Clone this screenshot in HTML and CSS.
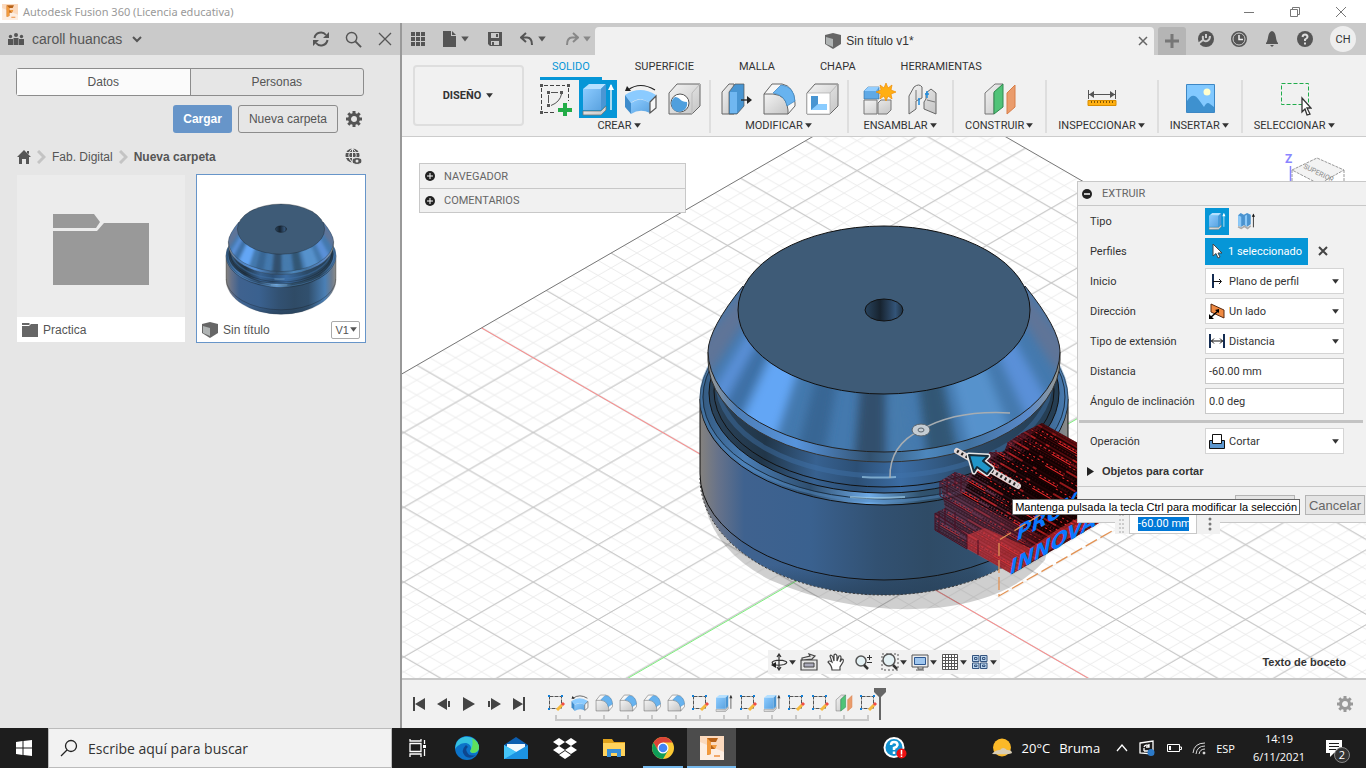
FILE: index.html
```html
<!DOCTYPE html>
<html lang="es">
<head>
    <meta charset="UTF-8">
    <title>Autodesk Fusion 360</title>
    <link rel="stylesheet" href="styles.css">
</head>
<body>
    <!-- shared icons -->
    <svg class="sprite" width="0" height="0" aria-hidden="true">
        <defs>
            <linearGradient id="g-blue" x1="0" y1="0" x2="1" y2="1">
                <stop offset="0" stop-color="#8ccbff"/><stop offset="1" stop-color="#5ba3e0"/>
            </linearGradient>
            <linearGradient id="g-gray" x1="0" y1="0" x2="1" y2="1">
                <stop offset="0" stop-color="#f4f4f4"/><stop offset="1" stop-color="#c4c4c4"/>
            </linearGradient>
            <linearGradient id="g-lip">
                <stop offset="0" stop-color="#9b9a96"/><stop offset=".08" stop-color="#4d7db5"/>
                <stop offset=".25" stop-color="#5794dc"/><stop offset=".46" stop-color="#32516f"/>
                <stop offset=".62" stop-color="#4d87bd"/><stop offset=".74" stop-color="#41719e"/>
                <stop offset=".91" stop-color="#5a8acb"/><stop offset="1" stop-color="#9b9a90"/>
            </linearGradient>
            <linearGradient id="g-base">
                <stop offset="0" stop-color="#85827e"/><stop offset=".05" stop-color="#66728a"/>
                <stop offset=".12" stop-color="#3f628f"/><stop offset=".3" stop-color="#3a618f"/>
                <stop offset=".48" stop-color="#325172"/><stop offset=".62" stop-color="#2f4b66"/>
                <stop offset=".75" stop-color="#31506e"/><stop offset=".9" stop-color="#4a7fb5"/>
                <stop offset=".96" stop-color="#6c7c90"/><stop offset="1" stop-color="#8d8c88"/>
            </linearGradient>
            <linearGradient id="g-rim">
                <stop offset="0" stop-color="#33597f"/><stop offset=".12" stop-color="#4a7db4"/>
                <stop offset=".3" stop-color="#2f4f70"/><stop offset=".46" stop-color="#6eaae6"/>
                <stop offset=".6" stop-color="#31536f"/><stop offset=".85" stop-color="#29445b"/>
                <stop offset="1" stop-color="#4a7db4"/>
            </linearGradient>
            <linearGradient id="g-groove">
                <stop offset="0" stop-color="#2a4259"/><stop offset=".15" stop-color="#213649"/>
                <stop offset=".3" stop-color="#376190"/><stop offset=".42" stop-color="#2c4f75"/>
                <stop offset=".55" stop-color="#3b6ca3"/><stop offset=".75" stop-color="#2b4a68"/>
                <stop offset="1" stop-color="#253d52"/>
            </linearGradient>
            <linearGradient id="g-hole">
                <stop offset="0" stop-color="#28445f"/><stop offset=".4" stop-color="#17232f"/>
                <stop offset=".8" stop-color="#335478"/><stop offset="1" stop-color="#1e3142"/>
            </linearGradient>
            <linearGradient id="g-fillet" x1="0" y1="0" x2="0" y2="1">
                <stop offset=".75" stop-color="#28415a" stop-opacity="0"/><stop offset="1" stop-color="#28415a" stop-opacity=".7"/>
            </linearGradient>
            <filter id="sheen"><feGaussianBlur stdDeviation="5"/></filter>
            <clipPath id="cone-clip"><path d="M743 286Q709 328 708 351A176 101 0 0 0 1060 351Q1059 328 1025 286Z"/></clipPath>
        </defs>

        <g id="model">
            <path fill="url(#g-base)" d="M700 399V478A184 117 0 0 0 1068 478V399Z"/>
            <path fill="url(#g-fillet)" d="M700 475A184 106 0 0 0 1068 475A184 120 0 0 1 700 475Z"/>
            <path fill="none" stroke="#111" d="M700 399V474A184 106 0 0 0 1068 474V399"/>
            <path fill="none" stroke="#333" stroke-dasharray="2 2" d="M700 478A184 117 0 0 0 1068 478"/>
            <ellipse cx="884" cy="399" rx="184" ry="106" fill="url(#g-rim)" stroke="#111"/>
            <ellipse cx="884" cy="397" rx="183" ry="104" fill="none" stroke="#5287bd" stroke-width="3" opacity=".5"/>
            <ellipse cx="884" cy="397" rx="181" ry="102" fill="none" stroke="#1c3044"/>
            <ellipse cx="884" cy="393" rx="175" ry="100" fill="url(#g-groove)" stroke="#111"/>
            <ellipse cx="884" cy="391" rx="170" ry="96" fill="url(#g-groove)" stroke="#111"/>
            <ellipse cx="884" cy="383" rx="166" ry="93" fill="none" stroke="#4174aa" stroke-width="5" opacity=".45"/>
            <ellipse cx="884" cy="374" rx="169" ry="94" fill="url(#g-groove)"/>
            <path fill="url(#g-lip)" stroke="#333" d="M708 352V360A176 102 0 0 0 1060 360V352Z"/>
            <g clip-path="url(#cone-clip)">
                <path fill="#4479ae" d="M700 270H1070V460H700Z"/>
                <g filter="url(#sheen)">
                    <path fill="#99958a" d="M884 110 480 510V200ZM884 110 1288 510V200Z"/>
                    <path fill="#5f7498" d="M884 110 570 510H620ZM884 110 1148 510H1198Z"/>
                    <path fill="#5a90d8" d="M884 110 640 510H665ZM884 110 1070 510H1110Z"/>
                    <path fill="#3d70a6" d="M884 110 668 510H695Z"/>
                    <path fill="#63a6f5" d="M884 110 700 510H752Z"/>
                    <path fill="#396694" d="M884 110 782 510H815Z"/>
                    <path fill="#31506d" d="M884 110 850 510H886Z"/>
                    <path fill="#477cad" d="M884 110 893 510H918Z"/>
                    <path fill="#335775" d="M884 110 934 510H970Z"/>
                    <path fill="#5792cc" d="M884 110 985 510H1042Z"/>
                </g>
            </g>
            <path fill="none" stroke="#222" d="M743 286Q709 328 708 351A176 101 0 0 0 1060 351Q1059 328 1025 286"/>
            <ellipse cx="884" cy="310" rx="146" ry="84" fill="#3e5b77" stroke="#111"/>
            <ellipse cx="884" cy="310" rx="19" ry="11" fill="url(#g-hole)" stroke="#111"/>
            <path fill="none" stroke="#a9d6ef" stroke-width="2" opacity=".6" d="M850 497Q875 499 905 497M862 477Q880 478 896 477"/>
        </g>

        <symbol id="i-cube" viewBox="0 0 16 16">
            <path fill="#666" d="M0 2 8 0 16 2V11L8 16 0 11Z"/><path fill="#b0b4b4" d="M1 4 8 6V14L1 11Z"/>
        </symbol>
        <symbol id="i-extrude" viewBox="0 0 34 34">
            <path fill="url(#g-gray)" stroke="#777" stroke-width=".8" d="M2 29H20L25 24V28L20 33H2Z"/>
            <path fill="#b5e0ff" d="M2 7 8 2H25L20 7Z"/><path fill="url(#g-blue)" d="M2 7H20V28H2Z"/><path fill="#4a96d4" d="M20 7 25 2V23L20 28Z"/>
            <path fill="none" stroke="currentColor" stroke-width="1.300" d="M30 28V3"/><path fill="currentColor" d="M27 8 30 2 33 8Z"/>
        </symbol>
        <symbol id="i-sketch" viewBox="0 0 34 34">
            <path fill="none" stroke="#444" stroke-dasharray="4 2" d="M6 3.500H27M6 30.500H18M3.500 6V28M30.500 6V19"/>
            <path fill="none" stroke="#555" d="M10.500 13V21M13 10.500H20M23.500 12Q22 20 13 23.500"/>
            <path fill="#555" d="M2 2H5V5H2ZM29 2H32V5H29ZM2 29H5V32H2ZM9 9H12V12H9ZM22 9H25V12H22ZM9 22H12V25H9Z"/>
            <path fill="#22ac47" d="M25 21H29V26H34V30H29V34H25V30H20V26H25Z"/>
        </symbol>
        <symbol id="i-revolve" viewBox="0 0 34 34">
            <path fill="none" stroke="#222" stroke-width="1.200" d="M4 8Q16-1 31 8"/><path fill="#222" d="M1 9 3 4 7 9Z"/>
            <path fill="#8bcbff" d="M1 13Q16 3 32 13L27 22Q16 13 7 21Z"/><path fill="#3f8ccc" d="M1 13 7 21V32L1 25Z"/>
            <path fill="url(#g-blue)" d="M7 21Q16 14 26 21V31Q16 26 7 32Z"/>
            <path fill="#f6f6f6" stroke="#555" stroke-width="1.200" d="M26 20 32 14V26L26 31Z"/>
        </symbol>
        <symbol id="i-hole" viewBox="0 0 34 34">
            <path fill="url(#g-gray)" stroke="#666" d="M2 11 10 2H33V24L25 32H2Z"/><path fill="none" stroke="#bbb" d="M25 32V11L33 2"/>
            <circle cx="13" cy="21" r="9" fill="#fff" stroke="#555"/><path fill="#4f9fdd" d="M8 15C13 15 13 20 20 20A8 8 0 1 1 8 15Z"/>
        </symbol>
        <symbol id="i-press" viewBox="0 0 34 34">
            <path fill="url(#g-gray)" stroke="#666" d="M3 10 10 2H15V32H3Z"/>
            <path fill="#4895d2" stroke="#555" stroke-width=".7" d="M10 10 16 2H25V24L18 32H10Z"/><path fill="#70b7f1" d="M11 10H18V31H11Z"/>
            <path stroke="#222" stroke-width="1.300" d="M22 18H30"/><path fill="#222" d="M28 14 33 18 28 22Z"/>
        </symbol>
        <symbol id="i-fillet" viewBox="0 0 34 34">
            <path fill="#f7f7f7" stroke="#666" d="M2 12 10 2H20Q32 4 33 21V24L26 32Z"/><path fill="url(#g-gray)" stroke="#666" d="M2 12H11Q25 13 26 28V32H2Z"/>
            <path fill="#68b3ef" stroke="#3b83bd" stroke-width=".7" d="M11 11 19 3Q32 4 33 19L25 24Q23 13 11 11Z"/>
        </symbol>
        <symbol id="i-shell" viewBox="0 0 34 34">
            <path fill="url(#g-gray)" stroke="#666" d="M2 11 10 2H33V24L25 32H2Z"/><path fill="#fff" stroke="#aaa" stroke-width=".7" d="M2 11H25V32H2ZM25 11 33 2"/>
            <path fill="#4895d2" d="M6 14H22V28H6Z"/><path fill="#fff" d="M13 14H22V22H13Z"/><path fill="#8accff" d="M6 28 13 22H22V28Z"/>
        </symbol>
        <symbol id="i-joint" viewBox="0 0 34 34">
            <path fill="#5fa9e6" stroke="#336d9b" stroke-width=".6" d="M2 9 6 5H17V17H2Z"/><path fill="#93ceff" d="M2 9 6 5H17L14 9Z"/>
            <path fill="url(#g-gray)" stroke="#777" d="M2 18H15V32H2ZM16 21 19 18H29V28L25 32H16Z"/>
            <path fill="#ffaf13" stroke="#f18c00" stroke-width=".7" d="M24 1 26 6 30 3 29 8 34 10 29 12 30 17 26 14 24 19 22 14 18 17 19 12 14 10 19 8 18 3 22 6Z"/>
        </symbol>
        <symbol id="i-asjoint" viewBox="0 0 34 34">
            <path fill="url(#g-gray)" stroke="#666" d="M4 14 9 5Q14 1 17 5V16L11 19V27L4 32ZM31 11 26 7 21 11V17L19 20V27L31 32Z"/>
            <path fill="none" stroke="#777" d="M11 8V18M22 18 30 20"/><path stroke="#1c8ce0" stroke-width="1.500" d="M14 16V23M22 9V16M20 12H24"/>
        </symbol>
        <symbol id="i-plane" viewBox="0 0 34 34">
            <path fill="url(#g-gray)" stroke="#777" d="M2 11 12 2H20L11 11V32H2Z"/><path fill="#50c378" stroke="#318a50" d="M11 10 20 2V25L11 32Z"/><path fill="#ea9c6c" stroke="#d87e48" d="M24 11 32 3V25L24 32Z"/>
        </symbol>
        <symbol id="i-measure" viewBox="0 0 34 34">
            <path stroke="#555" d="M3.500 8V17M30.500 8V17M4 12.500H30"/><path fill="#555" d="M4 12.500 9 9V16ZM30 12.500 25 9V16Z"/>
            <path fill="#ffb012" stroke="#d88d00" d="M3 18.500H31V23.500H3Z"/><path stroke="#835600" d="M6.500 19V21M9.500 19V21M12.500 19V21M15.500 19V21M18.500 19V21M21.500 19V21M24.500 19V21M27.500 19V21"/>
        </symbol>
        <symbol id="i-image" viewBox="0 0 34 34">
            <path fill="#82c9ff" stroke="#3d87c4" d="M3.500 2.500H31.500V30.500H3.500Z"/><circle cx="24" cy="10" r="3.500" fill="#ffffce"/>
            <path fill="#3e91cf" d="M4 19Q10 9 16 18L21 25Q24 19 27 22L31 25V30H4Z"/>
        </symbol>
        <symbol id="i-select" viewBox="0 0 34 34">
            <path fill="none" stroke="#20ac4b" stroke-dasharray="4 2" d="M3.500 1.500H30.500V22.500H3.500Z"/><path fill="#fff" stroke="#333" stroke-width="1.300" d="M24 16V30L27 27 29 33 32 32 29 26H33Z"/>
        </symbol>
        <symbol id="i-gear" viewBox="0 0 16 16">
            <circle cx="8" cy="8" r="4.500" fill="none" stroke="currentColor" stroke-width="3"/><path stroke="currentColor" stroke-width="3" d="M8 0V3M8 13V16M0 8H3M13 8H16M2.300 2.300 4.500 4.500M11.500 11.500 13.700 13.700M2.300 13.700 4.500 11.500M11.500 4.500 13.700 2.300"/>
        </symbol>
        <symbol id="i-minisketch" viewBox="0 0 18 18">
            <path fill="none" stroke="#555" stroke-dasharray="4 1" d="M2.500 2.500H14.500V14.500H2.500Z"/><path fill="#1380d8" d="M1 1H3V3H1ZM14 1H16V3H14ZM1 14H3V16H1Z"/>
            <path stroke="#f6b93d" stroke-width="3" d="M10 16 15 11"/><path stroke="#f14d43" stroke-width="3" d="M15 11 17 9"/>
        </symbol>
        <symbol id="i-down" viewBox="0 0 8 8"><path fill="currentColor" d="M1 2H7L4 6Z"/></symbol>
        <symbol id="i-lens" viewBox="0 0 18 18">
            <circle cx="7" cy="7" r="5.500" fill="none" stroke="currentColor" stroke-width="1.500"/><path stroke="currentColor" stroke-width="2" d="M11 11 17 17"/>
        </symbol>
        <symbol id="i-logo" viewBox="0 0 24 24">
            <path fill="#fbd9bd" d="M0 0H24V24H0Z"/><path fill="#fdeee2" d="M0 6 24 16V24H0Z"/>
            <path fill="#b76117" d="M7 2H18L16 6H11V9H16L15 13H11V18L7 19Z"/><path fill="#f29a3d" d="M7 2 11 6V18L7 19ZM11 9H17L15 13Z"/><path fill="#f2a769" d="M14 19H20V21H14Z"/>
        </symbol>
    </svg>

    <header class="titlebar">
        <svg class="app-logo" viewBox="0 0 24 24"><use href="#i-logo"/></svg>
        <span class="app-name">Autodesk Fusion 360 (Licencia educativa)</span>
        <div class="window-btns">
            <button aria-label="Minimizar"><svg viewBox="0 0 12 12"><path d="M1 6.500H11"/></svg></button>
            <button aria-label="Restaurar"><svg viewBox="0 0 12 12"><path d="M1.500 3.500H8.500V10.500H1.500ZM3.500 3V1.500H10.500V8.500H9"/></svg></button>
            <button aria-label="Cerrar"><svg viewBox="0 0 12 12"><path d="M1 1 11 11M11 1 1 11"/></svg></button>
        </div>
    </header>

    <div class="main">
        <aside class="data-panel">
            <div class="panel-head">
                <svg width="16" height="13" viewBox="0 0 16 13" fill="#555"><circle cx="2.500" cy="3.500" r="1.700"/><circle cx="8" cy="2" r="2"/><circle cx="13.500" cy="3.500" r="1.700"/><path d="M0 6H5V12H0ZM5.500 5H10.500V12H5.500ZM11 6H16V12H11Z"/></svg>
                <button class="team">caroll huancas <svg width="10" height="10" viewBox="0 0 10 10"><path fill="none" stroke="#555" stroke-width="2" d="M1 3 5 7 9 3"/></svg></button>
                <button aria-label="Actualizar"><svg width="16" height="16" viewBox="0 0 16 16"><path fill="none" stroke="#555" stroke-width="2" d="M1.500 7A6.500 6.500 0 0 1 13 4M14.500 9A6.500 6.500 0 0 1 3 12"/><path fill="#555" d="M16 1V7H10ZM0 15V9H6Z"/></svg></button>
                <button aria-label="Buscar"><svg width="17" height="17"><use href="#i-lens"/></svg></button>
                <button aria-label="Cerrar panel"><svg width="14" height="14" viewBox="0 0 14 14"><path stroke="#555" stroke-width="1.300" d="M1 1 13 13M13 1 1 13"/></svg></button>
            </div>
            <div class="panel-body">
                <div class="segment">
                    <button class="active">Datos</button>
                    <button>Personas</button>
                </div>
                <div class="actions">
                    <button class="upload">Cargar</button>
                    <button class="new-folder">Nueva carpeta</button>
                    <button class="gear" aria-label="Configuración"><svg width="16" height="16"><use href="#i-gear"/></svg></button>
                </div>
                <nav class="crumbs">
                    <a href="#" aria-label="Inicio"><svg width="14" height="14" viewBox="0 0 14 14" fill="#555"><path d="M7 0 14 7H12V14H9V9H5V14H2V7H0ZM10 1H12V4L10 3Z"/></svg></a>
                    <svg width="9" height="14" viewBox="0 0 9 14"><path fill="none" stroke="#c4c4c4" stroke-width="3" d="M1 1 7 7 1 13"/></svg>
                    <a href="#">Fab. Digital</a>
                    <svg width="9" height="14" viewBox="0 0 9 14"><path fill="none" stroke="#c4c4c4" stroke-width="3" d="M1 1 7 7 1 13"/></svg>
                    <b>Nueva carpeta</b>
                    <button aria-label="Abrir en la web"><svg width="17" height="17" viewBox="0 0 17 17"><circle cx="7.500" cy="7.500" r="7" fill="#555"/><path fill="none" stroke="#e6e6e6" d="M0 4.500H15M0 9.500H15M7.500 0V15M7.500 0Q0 7 7.500 15M7.500 0Q15 7 7.500 15"/><ellipse cx="12" cy="13" rx="5" ry="3.500" fill="#555" stroke="#e6e6e6"/><circle cx="12" cy="13" r="1.500" fill="#e6e6e6"/></svg></button>
                </nav>
                <div class="cards">
                    <div class="card">
                        <div class="thumb"><svg width="96" height="72" viewBox="0 0 96 72" fill="#999"><path d="M0 0H41L47 8 43 14H0Z"/><path d="M0 17H44L51 9H96V71H0Z"/></svg></div>
                        <div class="caption">
                            <svg width="16" height="14" viewBox="0 0 16 14" fill="#666"><path d="M0 0H7L8 1 7 2H0ZM0 3H7L9 1H16V14H0Z"/></svg>
                            <span>Practica</span>
                        </div>
                    </div>
                    <div class="card selected">
                        <div class="thumb"><svg width="168" height="142" viewBox="603 129 562 475"><use href="#model"/></svg></div>
                        <div class="caption">
                            <svg width="16" height="16"><use href="#i-cube"/></svg>
                            <span>Sin título</span>
                            <button class="version">V1<svg width="9" height="9"><use href="#i-down"/></svg></button>
                        </div>
                    </div>
                </div>
            </div>
        </aside>

        <main class="workspace">
            <div class="tabbar">
                <div class="quick">
                    <button aria-label="Panel de datos"><svg width="14" height="14" viewBox="0 0 14 14" fill="#555"><path d="M0 0H4V4H0ZM5 0H9V4H5ZM10 0H14V4H10ZM0 5H4V9H0ZM5 5H9V9H5ZM10 5H14V9H10ZM0 10H4V14H0ZM5 10H9V14H5ZM10 10H14V14H10Z"/></svg></button>
                    <button aria-label="Archivo"><svg width="14" height="16" viewBox="0 0 14 16" fill="#555"><path d="M0 0H8V5H13V16H0ZM9 0 13 4H9Z"/></svg><svg class="arrow" width="10" height="10"><use href="#i-down"/></svg></button>
                    <button aria-label="Guardar"><svg width="14" height="14" viewBox="0 0 14 14"><path fill="#555" d="M0 0H14V14H2L0 12Z"/><path fill="#cacaca" d="M3 1H11V6H3ZM3 9H11V13H3Z"/><path fill="#555" d="M8 2H10V5H8ZM4 10H6V13H4Z"/></svg></button>
                    <button aria-label="Deshacer"><svg width="14" height="14" viewBox="0 0 14 14"><path fill="none" stroke="#555" stroke-width="2" d="M6 1 1 5.500 6 10M1 5.500H7Q12 5.500 12 13"/></svg><svg class="arrow" width="10" height="10"><use href="#i-down"/></svg></button>
                    <button class="off" aria-label="Rehacer"><svg width="14" height="14" viewBox="0 0 14 14"><path fill="none" stroke="#888" stroke-width="2" d="M8 1 13 5.500 8 10M13 5.500H7Q2 5.500 2 13"/></svg><svg class="arrow" width="10" height="10"><use href="#i-down"/></svg></button>
                </div>
                <div class="doc-tab">
                    <span class="doc-name"><svg width="16" height="16"><use href="#i-cube"/></svg>Sin título v1*</span>
                    <button aria-label="Cerrar documento"><svg width="10" height="10" viewBox="0 0 10 10"><path stroke="#666" stroke-width="1.500" d="M1 1 9 9M9 1 1 9"/></svg></button>
                </div>
                <button class="new-tab" aria-label="Nuevo diseño"><svg width="14" height="14" viewBox="0 0 14 14"><path stroke="#777" stroke-width="3" d="M7 0V14M0 7H14"/></svg></button>
                <div class="account">
                    <button aria-label="Extensiones"><svg width="16" height="16" viewBox="0 0 16 16"><circle cx="8" cy="8" r="8" fill="#555"/><path fill="none" stroke="#ccc" stroke-width="2" d="M0 13 5 9M5 5Q4 11 9 10 12 9 12 5M8 3V7"/></svg></button>
                    <button aria-label="Estado del trabajo"><svg width="16" height="16" viewBox="0 0 16 16"><circle cx="8" cy="8" r="7" fill="#555" stroke="#555" stroke-width="2"/><circle cx="8" cy="8" r="6" fill="none" stroke="#ccc"/><path fill="none" stroke="#eee" stroke-width="1.500" d="M8 4V8.500H12"/></svg></button>
                    <button aria-label="Notificaciones"><svg width="16" height="16" viewBox="0 0 16 16" fill="#555"><path d="M8 0C13 1 11 9 14 12V13H2V12C5 9 3 1 8 0ZM6 14H10L8 16Z"/></svg></button>
                    <button aria-label="Ayuda"><svg width="16" height="16" viewBox="0 0 16 16"><circle cx="8" cy="8" r="8" fill="#555"/><path fill="none" stroke="#ddd" stroke-width="2" d="M5.500 6Q6 3.500 8 3.500 10.500 3.500 10.500 6 10.500 7 8 8.500V10M8 11.500V13.500"/></svg></button>
                    <button class="avatar">CH</button>
                </div>
            </div>

            <div class="ribbon">
                <button class="workspace-menu">DISEÑO <svg width="9" height="9"><use href="#i-down"/></svg></button>
                <div class="ribbon-main">
                    <div class="ribbon-tabs">
                        <button class="active">SOLIDO</button>
                        <button>SUPERFICIE</button>
                        <button>MALLA</button>
                        <button>CHAPA</button>
                        <button>HERRAMIENTAS</button>
                    </div>
                    <div class="groups">
                        <div class="group wide">
                            <div class="tools">
                                <button aria-label="Crear boceto"><svg><use href="#i-sketch"/></svg></button>
                                <button class="on" aria-label="Extruir"><svg><use href="#i-extrude"/></svg></button>
                                <button aria-label="Revolución"><svg><use href="#i-revolve"/></svg></button>
                                <button aria-label="Agujero"><svg><use href="#i-hole"/></svg></button>
                            </div>
                            <button class="group-name">CREAR<svg width="9" height="9"><use href="#i-down"/></svg></button>
                        </div>
                        <div class="group wide">
                            <div class="tools">
                                <button aria-label="Pulsar/tirar"><svg><use href="#i-press"/></svg></button>
                                <button aria-label="Empalme"><svg><use href="#i-fillet"/></svg></button>
                                <button aria-label="Vaciado"><svg><use href="#i-shell"/></svg></button>
                            </div>
                            <button class="group-name">MODIFICAR<svg width="9" height="9"><use href="#i-down"/></svg></button>
                        </div>
                        <div class="group">
                            <div class="tools">
                                <button aria-label="Nuevo componente"><svg><use href="#i-joint"/></svg></button>
                                <button aria-label="Unión"><svg><use href="#i-asjoint"/></svg></button>
                            </div>
                            <button class="group-name">ENSAMBLAR<svg width="9" height="9"><use href="#i-down"/></svg></button>
                        </div>
                        <div class="group">
                            <div class="tools"><button aria-label="Plano de desfase"><svg><use href="#i-plane"/></svg></button></div>
                            <button class="group-name">CONSTRUIR<svg width="9" height="9"><use href="#i-down"/></svg></button>
                        </div>
                        <div class="group">
                            <div class="tools"><button aria-label="Medir"><svg><use href="#i-measure"/></svg></button></div>
                            <button class="group-name">INSPECCIONAR<svg width="9" height="9"><use href="#i-down"/></svg></button>
                        </div>
                        <div class="group">
                            <div class="tools"><button aria-label="Lienzo"><svg><use href="#i-image"/></svg></button></div>
                            <button class="group-name">INSERTAR<svg width="9" height="9"><use href="#i-down"/></svg></button>
                        </div>
                        <div class="group">
                            <div class="tools"><button aria-label="Seleccionar"><svg><use href="#i-select"/></svg></button></div>
                            <button class="group-name">SELECCIONAR<svg width="9" height="9"><use href="#i-down"/></svg></button>
                        </div>
                    </div>
                </div>
            </div>

            <div class="canvas">
                <svg class="scene" viewBox="402 137 964 541" preserveAspectRatio="xMidYMid slice">
                    <defs>
                        <pattern id="minor" x="533.300" y="357.700" width="25.900" height="14.960" patternUnits="userSpaceOnUse">
                            <path fill="none" stroke="#e9e9e9" stroke-width=".9" d="M0 0 25.900 14.960M0 14.960 25.900 0"/>
                        </pattern>
                        <pattern id="major" x="533.300" y="357.700" width="129.500" height="74.800" patternUnits="userSpaceOnUse">
                            <path fill="none" stroke="#c2c2c2" d="M0 0 129.500 74.800M0 74.800 129.500 0"/>
                        </pattern>
                        <!-- edges of the extruded letters -->
                        <pattern id="edges" width="61" height="13" patternUnits="userSpaceOnUse" patternTransform="rotate(30)">
                            <path stroke="#120000" stroke-width="1.300" d="M0 .5H61M0 3.500H61M0 6.500H61M0 11.500H61"/>
                            <path stroke="#000" stroke-dasharray="2 1" d="M0 2H61M0 8H40M12 9.500H61"/>
                            <path stroke="#f0282a" d="M0 5H18M30 5H34M40 10.500H61"/>
                            <path stroke="#f0282a" stroke-dasharray="2 3" d="M20 8.500H61M0 12.500H30"/>
                        </pattern>
                        <linearGradient id="g-cut">
                            <stop offset="0" stop-color="#7a3556" stop-opacity=".55"/><stop offset=".3" stop-color="#7d2338" stop-opacity=".75"/>
                            <stop offset=".55" stop-color="#5a0c12"/><stop offset="1" stop-color="#c41b20"/>
                        </linearGradient>
                    </defs>
                    <path fill="url(#minor)" d="M909 81 200 490.500V800H1500V422Z"/>
                    <path fill="url(#major)" d="M909 81 200 490.500V800H1500V422Z"/>
                    <path fill="none" stroke="#777" d="M200 490.500 909 81 1500 422"/>
                    <path stroke="#ff8a8a" d="M481.700 328 1094 681.500"/>
                    <path stroke="#7df07d" d="M1120 394 624 680.500"/>

                    <path fill="#000" opacity=".19" d="M702 480Q702 545 770 580 850 615 935 608 1010 600 1045 560L1060 500Z"/>
                    <use href="#model"/>

                    <path fill="url(#g-cut)" d="M935 513 945 508 940 481 955 472 968 476 990 452 1004 452 1008 442 1022 433 1042 423 1130 472V505L1012 574 935 530Z"/>
                    <path fill="url(#edges)" opacity=".55" d="M935 513 945 508 940 481 955 472 968 476 990 452 1004 452 1008 442 1022 433 1042 423 1130 472V505L1012 574 935 530Z"/>
                    <path fill="#000" opacity=".55" d="M985 478 1030 448 1130 505 1060 525 1020 520Z"/>
                    <path fill="url(#edges)" d="M975 470 1010 447 1042 428 1130 478V510L1040 535 1018 525 962 495Z"/>
                    <path fill="#f03a3c" opacity=".5" d="M967 535 985 528 1030 548 1060 528 1110 500V512L1012 574 967 549Z"/>
                    <path fill="none" stroke="#4a0f22" d="M935 513V530L967 549V535ZM939 511V532M940 481V496L965 510M947 478V494M955 472V487M961 476V492M990 452V465M996 450V466M1008 442V455M1022 433V446M1030 430V444M945 508V525M955 512V530M978 540V555"/>
                    <g class="lettering">
                        <text transform="translate(1017 541) skewY(-30)">PROYEC</text>
                        <text transform="translate(1010 575) skewY(-30)">INNOVAC</text>
                    </g>
                    <path fill="none" stroke="#e29355" stroke-width="1.300" stroke-dasharray="13 4" d="M1040 515 999 540V596L1112 531"/>

                    <path fill="none" stroke="#a7adb2" stroke-width="1.500" d="M890 478Q889 445 921 430 955 410 1010 413"/>
                    <ellipse cx="921" cy="430" rx="9" ry="6" fill="#c5cdd4" stroke="#59636b"/><ellipse cx="921" cy="430" rx="3" ry="2" fill="none" stroke="#59636b"/>
                    <path stroke="#e0d6d6" stroke-width="6" stroke-linecap="round" d="M957 451 1018 486"/>
                    <path stroke="#222" stroke-width="3" stroke-dasharray="2 3" d="M957 451 1018 486"/>
                    <path fill="#2095c9" stroke="#e8e8e8" stroke-width="5" stroke-linejoin="round" d="M969 455 988 456 983 461 992 468 987 474 977 467 974 472Z"/>
                    <path fill="#2095c9" stroke="#172b38" stroke-width="2" stroke-linejoin="round" d="M969 455 988 456 983 461 992 468 987 474 977 467 974 472Z"/>

                    <!-- view cube -->
                    <path fill="#f3f3f3" stroke="#999" stroke-dasharray="3 1" d="M1292 170 1317 158 1344 170 1319 184ZM1344 170V190M1292 170V190"/>
                    <path stroke="#8a86ff" stroke-width="1.500" d="M1290.500 166V182"/>
                    <text class="axis" x="1285" y="163">Z</text>
                    <text class="face" transform="translate(1303 168) rotate(26)">SUPERIOR</text>
                </svg>

                <div class="browser">
                    <button><svg width="10" height="10" viewBox="0 0 10 10"><circle cx="5" cy="5" r="5" fill="#222"/><path stroke="#fff" d="M5 2V8M2 5H8"/></svg>NAVEGADOR</button>
                    <button><svg width="10" height="10" viewBox="0 0 10 10"><circle cx="5" cy="5" r="5" fill="#222"/><path stroke="#fff" d="M5 2V8M2 5H8"/></svg>COMENTARIOS</button>
                </div>

                <form class="dialog">
                    <div class="dialog-head"><svg width="10" height="10" viewBox="0 0 10 10"><circle cx="5" cy="5" r="5" fill="#222"/><path stroke="#fff" stroke-width="1.500" d="M2 5H8"/></svg>EXTRUIR</div>
                    <div class="row">
                        <span class="label">Tipo</span>
                        <button type="button" class="kind on" aria-label="Extrusión"><svg><use href="#i-extrude"/></svg></button>
                        <button type="button" class="kind" aria-label="Extrusión fina"><svg viewBox="0 0 34 32"><path fill="#4a93cf" d="M2 5 7 1 13 4 19 1 26 4V22L19 27 13 24 8 27 2 25Z"/><path fill="#8cc9f8" d="M2 5 8 8V27L2 25ZM15 6 19 4V26L15 24Z"/><path fill="none" stroke="#aaa" stroke-width="3" d="M2 27 8 30 14 26 20 30 26 25"/><path stroke="#111" stroke-width="1.500" d="M31 28V4"/><path fill="#111" d="M28 8 31 2 34 8Z"/></svg></button>
                    </div>
                    <div class="row">
                        <span class="label">Perfiles</span>
                        <button type="button" class="picked"><svg width="12" height="16" viewBox="0 0 12 16"><path fill="#fff" stroke="#444" d="M2 1V13L5 10.500 7 15 9 14 7 10H11Z"/></svg>1 seleccionado</button>
                        <button type="button" class="clear" aria-label="Borrar selección"><svg width="10" height="10" viewBox="0 0 10 10"><path stroke="#444" stroke-width="2" d="M1 1 9 9M9 1 1 9"/></svg></button>
                    </div>
                    <div class="row">
                        <label class="label" for="start">Inicio</label>
                        <div class="field"><svg width="16" height="16" viewBox="0 0 16 16"><path fill="none" stroke="#142c52" stroke-width="2" d="M4 1V15"/><path fill="none" stroke="#111" d="M4 8.500H12M10 6 12.500 8.500 10 11"/></svg><select id="start"><option>Plano de perfil</option></select><svg class="arrow" width="9" height="9"><use href="#i-down"/></svg></div>
                    </div>
                    <div class="row">
                        <label class="label" for="direction">Dirección</label>
                        <div class="field"><svg width="16" height="16" viewBox="0 0 16 16"><path fill="#f08a42" stroke="#5b2a10" d="M2 1 15 7V15L2 9Z"/><path stroke="#000" stroke-width="1.500" d="M1 15 9 8"/><path fill="#000" d="M0 16V11L5 16ZM10 6V10L6 7Z"/></svg><select id="direction"><option>Un lado</option></select><svg class="arrow" width="9" height="9"><use href="#i-down"/></svg></div>
                    </div>
                    <div class="row">
                        <label class="label" for="extent">Tipo de extensión</label>
                        <div class="field"><svg width="16" height="16" viewBox="0 0 16 16"><path stroke="#142c52" stroke-width="2" d="M1 1V15M15 1V15"/><path fill="none" stroke="#111" d="M2 8H14M5 5.500 2.500 8 5 10.500M11 5.500 13.500 8 11 10.500"/></svg><select id="extent"><option>Distancia</option></select><svg class="arrow" width="9" height="9"><use href="#i-down"/></svg></div>
                    </div>
                    <div class="row">
                        <label class="label" for="distance">Distancia</label>
                        <input class="text-input" id="distance" value="-60.00 mm">
                    </div>
                    <div class="row">
                        <label class="label" for="taper">Ángulo de inclinación</label>
                        <input class="text-input" id="taper" value="0.0 deg">
                    </div>
                    <hr>
                    <div class="row">
                        <label class="label" for="operation">Operación</label>
                        <div class="field"><svg width="16" height="16" viewBox="0 0 16 16"><path fill="#5c97cf" stroke="#111" d="M.5 7.500H15.500V15.500H.5Z"/><path fill="#fff" stroke="#111" d="M3.500 1.500H12.500V10.500H3.500Z"/></svg><select id="operation"><option>Cortar</option></select><svg class="arrow" width="9" height="9"><use href="#i-down"/></svg></div>
                    </div>
                    <button type="button" class="expander"><svg width="7" height="9" viewBox="0 0 7 9"><path fill="#222" d="M0 0 7 4.500 0 9Z"/></svg>Objetos para cortar</button>
                    <div class="dialog-foot">
                        <button type="button" aria-label="Aceptar"></button>
                        <button type="button">Cancelar</button>
                    </div>
                </form>

                <div class="value-box">
                    <span class="grip"></span>
                    <span class="value"><input aria-label="Distancia" value="-60.00 mm"></span>
                    <button aria-label="Más opciones"><svg width="4" height="14" viewBox="0 0 4 14" fill="#777"><circle cx="2" cy="2" r="1.500"/><circle cx="2" cy="7" r="1.500"/><circle cx="2" cy="12" r="1.500"/></svg></button>
                </div>
                <div class="tooltip" role="tooltip">Mantenga pulsada la tecla Ctrl para modificar la selección</div>

                <div class="navbar">
                    <button aria-label="Órbita"><svg width="18" height="18" viewBox="0 0 18 18"><path fill="none" stroke="#333" stroke-width="1.200" d="M9 1V17M7 4 9 1 11 4M7 14 9 17 11 14M3 11.500Q9 13 14 11.500 18 10 16 8.500 10 6 4 8 1 9 3 11"/><path fill="#222" d="M1 12 6 9V15Z"/></svg><svg class="arrow" width="9" height="9"><use href="#i-down"/></svg></button>
                    <button aria-label="Mirar a"><svg width="18" height="18" viewBox="0 0 18 18"><path fill="#e4e4e4" stroke="#444" stroke-width="1.200" d="M1 7H17V17H1ZM2 5 10 3 9 1 15 3 12 6 2 7Z"/><path fill="#aab" stroke="#444" d="M4 10H14V14H4Z"/></svg></button>
                    <button aria-label="Encuadre"><svg width="18" height="18" viewBox="0 0 18 18"><path fill="#fff" stroke="#444" stroke-width="1.200" d="M5 17Q5 13 1 9 2 7 5 9L3 3Q4 1 6 4L7 8V2Q9 0 10 3V8L12 3Q14 2 14 5L13 9 15 6Q17 6 16 9L13 14V17Z"/></svg></button>
                    <button aria-label="Zoom"><svg width="18" height="18" viewBox="0 0 18 18"><circle cx="7" cy="8" r="5" fill="#e4f1f4" stroke="#555" stroke-width="1.500"/><path stroke="#333" stroke-width="2.500" d="M10 12 14 16"/><path stroke="#333" d="M13 4.500H18M15.500 2V7M13 9.500H18"/></svg></button>
                    <button aria-label="Ajustar"><svg width="18" height="18" viewBox="0 0 18 18"><path fill="none" stroke="#555" stroke-dasharray="2 2" d="M1 1H17V17H1Z"/><circle cx="8" cy="7" r="6" fill="#e4f1f4" stroke="#555" stroke-width="1.500"/><path stroke="#333" stroke-width="2.500" d="M12 12 16 16"/></svg><svg class="arrow" width="9" height="9"><use href="#i-down"/></svg></button>
                    <button aria-label="Visualización"><svg width="18" height="18" viewBox="0 0 18 18"><path fill="#eee" stroke="#555" d="M1 2H17V14H1Z"/><path fill="#9fc6ee" stroke="#2e5891" d="M3.500 4.500H14.500V11.500H3.500Z"/><path fill="none" stroke="#555" d="M7 14V16H12V14M5 17H13"/></svg><svg class="arrow" width="9" height="9"><use href="#i-down"/></svg></button>
                    <button aria-label="Rejilla"><svg width="18" height="18" viewBox="0 0 18 18"><path fill="#fff" stroke="#555" d="M1.500 1.500H16.500V16.500H1.500ZM4.500 1V17M7.500 1V17M10.500 1V17M13.500 1V17M1 4.500H17M1 7.500H17M1 10.500H17M1 13.500H17"/></svg><svg class="arrow" width="9" height="9"><use href="#i-down"/></svg></button>
                    <button aria-label="Ventanas"><svg width="18" height="18" viewBox="0 0 18 18"><path fill="#bdd6ee" stroke="#34547f" d="M1.500 2.500H8V8.500H1.500ZM9.500 2.500H16V8.500H9.500ZM1.500 10H8V15.500H1.500ZM9.500 10H16V15.500H9.500ZM3.500 4.500H6V6.500H3.500ZM11.500 4.500H14V6.500H11.500ZM3.500 12H6V13.500H3.500ZM11.500 12H14V13.500H11.500Z"/></svg><svg class="arrow" width="9" height="9"><use href="#i-down"/></svg></button>
                </div>
                <div class="hint">Texto de boceto</div>
            </div>

            <div class="timeline">
                <div class="playback">
                    <button aria-label="Ir al inicio"><svg width="14" height="14" viewBox="0 0 14 14"><path d="M1 0H3V14H1ZM13 1V13L3 7Z"/></svg></button>
                    <button aria-label="Paso atrás"><svg width="14" height="14" viewBox="0 0 14 14"><path d="M10 1V13L0 7ZM11 4H13V10H11Z"/></svg></button>
                    <button aria-label="Reproducir"><svg width="14" height="14" viewBox="0 0 14 14"><path d="M1 0 13 7 1 14Z"/></svg></button>
                    <button aria-label="Paso adelante"><svg width="14" height="14" viewBox="0 0 14 14"><path d="M4 1V13L14 7ZM1 4H3V10H1Z"/></svg></button>
                    <button aria-label="Ir al final"><svg width="14" height="14" viewBox="0 0 14 14"><path d="M11 0H13V14H11ZM1 1V13L11 7Z"/></svg></button>
                </div>
                <div class="features">
                    <button aria-label="Boceto1"><svg><use href="#i-minisketch"/></svg></button>
                    <button aria-label="Revolución1"><svg><use href="#i-revolve"/></svg></button>
                    <button aria-label="Empalme1"><svg><use href="#i-fillet"/></svg></button>
                    <button aria-label="Empalme2"><svg><use href="#i-fillet"/></svg></button>
                    <button aria-label="Empalme3"><svg><use href="#i-fillet"/></svg></button>
                    <button aria-label="Empalme4"><svg><use href="#i-fillet"/></svg></button>
                    <button aria-label="Boceto2"><svg><use href="#i-minisketch"/></svg></button>
                    <button aria-label="Extrusión1"><svg><use href="#i-extrude"/></svg></button>
                    <button aria-label="Boceto3"><svg><use href="#i-minisketch"/></svg></button>
                    <button aria-label="Extrusión2"><svg><use href="#i-extrude"/></svg></button>
                    <button aria-label="Boceto4"><svg><use href="#i-minisketch"/></svg></button>
                    <button aria-label="Boceto5"><svg><use href="#i-minisketch"/></svg></button>
                    <button aria-label="Plano1"><svg><use href="#i-plane"/></svg></button>
                    <button aria-label="Boceto6"><svg><use href="#i-minisketch"/></svg></button>
                </div>
                <svg class="marker" width="12" height="32" viewBox="0 0 12 32" fill="#666"><path d="M0 0H12V4L7 9V32H5V9L0 4Z"/></svg>
                <button class="timeline-gear" aria-label="Preferencias"><svg width="16" height="16"><use href="#i-gear"/></svg></button>
            </div>
        </main>
    </div>

    <footer class="taskbar">
        <button class="start" aria-label="Inicio"><svg width="16" height="16" viewBox="0 0 16 16" fill="#fff"><path d="M0 2 6.500 1V7.500H0ZM7.500 1 16 0V7.500H7.500ZM0 8.500H6.500V15L0 14ZM7.500 8.500H16V16L7.500 15Z"/></svg></button>
        <label class="search">
            <svg width="18" height="18" viewBox="0 0 18 18"><circle cx="11" cy="7" r="5.500" fill="none" stroke="#222" stroke-width="1.300"/><path stroke="#222" stroke-width="1.300" d="M7 11 1 17"/></svg>
            <input type="text" placeholder="Escribe aquí para buscar" aria-label="Buscar">
        </label>
        <div class="apps">
            <button aria-label="Vista de tareas"><svg width="18" height="18" viewBox="0 0 18 18"><path fill="none" stroke="#fff" stroke-width="1.300" d="M1 4.500H12V12.500H1ZM1 0V2H12V0M1 18V15H12V18M15.500 1V5M15.500 10V17"/><path fill="#fff" d="M14 6H17V9H14Z"/></svg></button>
            <button aria-label="Edge"><svg width="24" height="24" viewBox="0 0 24 24"><circle cx="12" cy="12" r="12" fill="#0c73c9"/><path fill="#35c1e0" d="M1 8C5-3 21-1 24 10 25 17 18 18 15 16 18 12 15 7 10 7 6 7 2 10 0 13Z"/><path fill="#5fdf5c" d="M17 2Q24 6 24 12 23 17 17 17L15 15Q19 9 17 2Z"/><path fill="#0d468f" d="M11 9Q5 15 10 20 15 24 21 19 14 21 12 16 10 13 13 11Z"/></svg></button>
            <button aria-label="Correo"><svg width="24" height="24" viewBox="0 0 24 24"><path fill="#0c5eb0" d="M0 9 12 1 24 9V15H0Z"/><path fill="#f2f8fd" d="M3 8H21V16H3Z"/><path fill="#3ab9f2" d="M0 9 24 23H0Z"/><path fill="#1c93e2" d="M24 9 0 23H24Z"/><path fill="#45c5f8" d="M0 9 12 16 0 23Z"/></svg></button>
            <button aria-label="Dropbox"><svg width="24" height="22" viewBox="0 0 24 22" fill="#fff"><path d="M6 1 12 5 6 9 0 5ZM18 1 24 5 18 9 12 5ZM6 9 12 13 6 17 0 13ZM18 9 24 13 18 17 12 13ZM12 14 18 18 12 22 6 18Z"/></svg></button>
            <button aria-label="Explorador de archivos"><svg width="22" height="20" viewBox="0 0 22 20"><path fill="#e0a21c" d="M0 1H9L11 4H22V18H0Z"/><path fill="#ffd35c" d="M0 5H22V18H0Z"/><path fill="#398fd6" d="M4 11H18V19H14V15H8V19H4Z"/></svg></button>
            <button class="running" aria-label="Chrome"><svg width="24" height="24" viewBox="0 0 24 24"><circle cx="12" cy="12" r="11" fill="#fcc934"/><path fill="#db4437" d="M2.500 6.500A11 11 0 0 1 21.500 6.500H12V12L7.200 14.700Z"/><path fill="#0f9d58" d="M2.500 6.500A11 11 0 0 0 12 23L17 14.500 7.200 14.700Z"/><circle cx="12" cy="12" r="5.500" fill="#fff"/><circle cx="12" cy="12" r="4.300" fill="#4285f4"/></svg></button>
            <button class="running current" aria-label="Fusion 360"><svg width="24" height="24"><use href="#i-logo"/></svg></button>
        </div>
        <button class="help" aria-label="Ayuda"><svg width="24" height="22" viewBox="0 0 24 22"><circle cx="11" cy="10.500" r="9.500" fill="#1191d0" stroke="#fff" stroke-width="2"/><path fill="none" stroke="#fff" stroke-width="2.500" d="M8 8Q8 5 11 5 14.500 5 14.500 8 14 10 11 11V13M11 14.500V17"/><circle cx="18.500" cy="16.500" r="5" fill="#e11"/><path stroke="#fff" stroke-width="1.500" d="M18.500 13V17.500M18.500 18.500V20"/></svg></button>
        <button class="weather"><svg width="22" height="20" viewBox="0 0 22 20"><circle cx="11" cy="9.500" r="9" fill="#fbb928"/><path fill="#d8cdb5" d="M1 16Q4 12 9 12 12 8 16 12 21 12 21 15 19 17 1 16Z"/></svg><span>20°C</span><span>Bruma</span></button>
        <div class="tray">
            <button aria-label="Iconos ocultos"><svg width="12" height="8" viewBox="0 0 12 8"><path fill="none" stroke="#fff" stroke-width="1.300" d="M1 7 6 1 11 7"/></svg></button>
            <button aria-label="Sincronización"><svg width="18" height="16" viewBox="0 0 18 16"><path fill="none" stroke="#fff" stroke-width="1.300" d="M2 3 15 1V14L2 13ZM6 7A3 3 0 0 1 11 6M11 4V7H8M6 11H10M6 11V8"/><circle cx="13" cy="12.500" r="3.500" fill="#2c7ac9"/></svg></button>
            <button aria-label="Batería"><svg width="16" height="10" viewBox="0 0 16 10"><path fill="none" stroke="#fff" d="M1.500 1.500H13.500V8.500H1.500ZM14 4H15.500V6.500H14"/><path fill="#fff" d="M3 3H5V7H3Z"/></svg></button>
            <button aria-label="Wi-Fi"><svg width="14" height="14" viewBox="0 0 14 14" fill="none" stroke="#ddd"><path d="M1 12Q2 2 13 2M4 13Q5 5 13 5M7 13Q8 8 13 8"/><circle cx="12" cy="12" r="1" fill="#fff"/></svg></button>
            <span>ESP</span>
        </div>
        <div class="clock"><span>14:19</span><span>6/11/2021</span></div>
        <button class="notices" aria-label="2 notificaciones"><svg width="17" height="17" viewBox="0 0 17 17"><path fill="#fff" d="M0 0H16V13H8L4 17V13H0Z"/><path stroke="#1d1d1d" d="M3 3.500H13M3 6.500H13M3 9.500H10"/></svg><span class="count">2</span></button>
    </footer>
</body>
</html>
```
FILE: styles.css
```css
*{
    margin: 0;
    padding: 0;
    box-sizing: border-box;
}
body{
    height: 100vh;
    display: flex;
    flex-direction: column;
    overflow: hidden;
    font-family: Roboto, "Liberation Sans", sans-serif;
    font-size: 11px;
    color: #333;
    background-color: #f1f1f1;
}
button,input,select{
    font: inherit;
    color: inherit;
    border: none;
    background: none;
    outline: none;
}
button{
    display: flex;
    align-items: center;
    justify-content: center;
    white-space: nowrap;
}
a{
    color: inherit;
    text-decoration: none;
}
svg{
    display: block;
    flex-shrink: 0;
}
.sprite{
    position: absolute;
}

/* title bar */
.titlebar{
    display: flex;
    align-items: center;
    height: 23px;
    padding-left: 2px;
    background-color: #fff;
    color: #999;
    font-family: "Noto Sans", sans-serif;
    font-size: 11px;
}
.app-logo{
    width: 16px;
    height: 16px;
}
.app-name{
    flex: 1;
    padding-left: 5px;
}
.window-btns{
    display: flex;
    padding-right: 2px;
}
.window-btns button{
    width: 46px;
    height: 20px;
}
.window-btns svg{
    width: 12px;
    height: 12px;
    fill: none;
    stroke: #777;
}

.main{
    flex: 1;
    display: flex;
    min-height: 0;
}

/* data panel */
.data-panel{
    width: 402px;
    flex-shrink: 0;
    border-right: 2px solid #999;
    background-color: #e6e6e6;
    color: #555;
    font-family: "Liberation Sans", sans-serif;
    font-size: 12px;
}
.panel-head{
    display: flex;
    align-items: center;
    gap: 16px;
    height: 32px;
    padding: 0 8px;
    background-color: #cacaca;
}
.panel-head .team{
    flex: 1;
    justify-content: flex-start;
    gap: 10px;
    margin-left: -8px;
    font-size: 14px;
}
.panel-body{
    padding: 13px 34px 0 16px;
}
.segment{
    display: flex;
    height: 28px;
    margin-right: 2px;
    border: 1px solid #8c8c8c;
    border-radius: 3px;
}
.segment button{
    flex: 1;
}
.segment .active{
    background-color: #fbfbfb;
    border-right: 1px solid #8c8c8c;
}
.actions{
    display: flex;
    justify-content: flex-end;
    gap: 6px;
    padding: 9px 4px 0 0;
}
.actions button{
    height: 28px;
    border-radius: 3px;
}
.actions .upload{
    padding: 0 10px;
    background-color: #6795c9;
    color: #fff;
    font-weight: bold;
}
.actions .new-folder{
    padding: 0 10px;
    border: 1px solid #8c8c8c;
}
.actions .gear{
    margin-left: 2px;
}
.crumbs{
    display: flex;
    align-items: center;
    gap: 6px;
    height: 41px;
    padding: 6px 4px 0 1px;
}
.crumbs button{
    margin-left: auto;
}
.cards{
    display: flex;
    gap: 10px;
}
.card{
    flex: 1;
    border: 1px solid #e6e6e6;
    background-color: #fff;
}
.card.selected{
    border-color: #6795c9;
}
.thumb{
    display: flex;
    align-items: center;
    justify-content: center;
    height: 142px;
    padding-top: 8px;
    background-color: #ececec;
}
.selected .thumb{
    padding: 0;
    background-color: #fff;
}
.caption{
    display: flex;
    align-items: center;
    gap: 5px;
    height: 25px;
    padding: 0 5px;
}
.version{
    height: 18px;
    padding: 0 1px 0 4px;
    margin-left: auto;
    border: 1px solid #aaa;
    border-radius: 2px;
    font-size: 11px;
}

/* document tabs */
.workspace{
    flex: 1;
    display: flex;
    flex-direction: column;
    min-width: 0;
}
.tabbar{
    display: flex;
    height: 32px;
    background-color: #cacaca;
    color: #333;
}
.quick{
    display: flex;
    align-items: center;
    gap: 18px;
    width: 193px;
    padding-left: 9px;
}
.quick button{
    gap: 3px;
}
.quick .arrow{
    color: #555;
}
.quick .off .arrow{
    color: #888;
}
.doc-tab{
    flex: 1;
    display: flex;
    align-items: center;
    margin-top: 4px;
    padding: 0 6px;
    border-radius: 4px 4px 0 0;
    background-color: #f1f1f1;
    font-family: "Liberation Sans", sans-serif;
    font-size: 12px;
}
.doc-name{
    flex: 1;
    display: flex;
    align-items: center;
    justify-content: center;
    gap: 5px;
}
.new-tab{
    width: 28px;
    margin: 4px 4px 0 4px;
    border-radius: 3px 3px 0 0;
    background-color: #b5b5b5;
}
.account{
    display: flex;
    align-items: center;
    gap: 17px;
    padding: 0 10px 0 8px;
}
.avatar{
    width: 26px;
    height: 26px;
    border-radius: 50%;
    background-color: #eee;
}

/* ribbon */
.ribbon{
    display: flex;
    height: 82px;
    border-bottom: 1px solid #ccc;
}
.workspace-menu{
    width: 111px;
    height: 61px;
    margin: 10px 12px 0 11px;
    gap: 4px;
    border: 2px solid #dedede;
    border-radius: 4px;
    font-weight: bold;
}
.ribbon-tabs{
    display: flex;
    gap: 21px;
    height: 25px;
    padding-left: 4px;
}
.ribbon-tabs button{
    padding: 0 12px;
    border-bottom: 3px solid transparent;
}
.ribbon-tabs .active{
    color: #0696d7;
    border-color: #0696d7;
}
.groups{
    display: flex;
    height: 53px;
}
.group{
    display: flex;
    flex-direction: column;
    align-items: center;
    padding: 0 11px;
    border-right: 2px solid #dedede;
}
.group:last-child{
    border: none;
}
.group.wide{
    padding: 0 6px;
}
.group.wide:first-child{
    padding-left: 0;
}
.tools{
    display: flex;
    gap: 5px;
}
.tools button{
    width: 38px;
    height: 38px;
    color: #fff;
}
.tools svg{
    width: 34px;
    height: 34px;
}
.tools .on{
    background-color: #0696d7;
}
.group-name{
    height: 20px;
    gap: 1px;
}

/* modelling canvas */
.canvas{
    flex: 1;
    position: relative;
    min-height: 0;
    overflow: hidden;
    background-color: #fff;
}
.scene{
    width: 100%;
    height: 100%;
}
.lettering{
    font-family: "DejaVu Sans", sans-serif;
    font-size: 20px;
    font-weight: bold;
    font-style: italic;
    fill: #0a78ff;
}
.axis{
    font-size: 12px;
    font-weight: bold;
    fill: #8a86ff;
}
.face{
    font-size: 7px;
    fill: #888;
}
.browser{
    position: absolute;
    left: 17px;
    top: 26px;
    width: 267px;
    border: 1px solid #c8c8c8;
    background-color: #f1f1f1;
    color: #666;
}
.browser button{
    justify-content: flex-start;
    gap: 9px;
    width: 100%;
    height: 24px;
    padding-left: 5px;
}
.browser button + button{
    border-top: 1px solid #c8c8c8;
}

/* extrude dialog */
.dialog{
    position: absolute;
    right: 0;
    top: 44px;
    width: 289px;
    border: solid #c8c8c8;
    border-width: 1px 0 1px 1px;
    background-color: #f1f1f1;
}
.dialog-head{
    display: flex;
    align-items: center;
    gap: 10px;
    height: 24px;
    padding-left: 4px;
    border-bottom: 1px solid #c8c8c8;
    color: #666;
}
.row{
    display: flex;
    align-items: center;
    height: 30px;
    padding: 0 22px 0 12px;
}
.label{
    width: 115px;
}
.kind{
    width: 24px;
    height: 27px;
    margin-right: 5px;
    color: #fff;
}
.kind svg{
    width: 18px;
    height: 18px;
}
.kind.on{
    background-color: #0696d7;
}
.picked{
    height: 27px;
    gap: 5px;
    padding: 0 6px;
    background-color: #0696d7;
    color: #fff;
}
.clear{
    width: 30px;
    height: 27px;
}
.field{
    flex: 1;
    display: flex;
    align-items: center;
    gap: 4px;
    height: 26px;
    padding: 0 3px;
    border: 1px solid #d4d4d4;
    background-color: #fff;
}
.field select{
    flex: 1;
    min-width: 0;
    appearance: none;
}
.text-input{
    flex: 1;
    min-width: 0;
    height: 26px;
    padding: 0 3px;
    border: 1px solid #c8c8c8;
    background-color: #fff;
}
.dialog hr{
    height: 3px;
    margin: 4px 3px 3px 1px;
    border: none;
    background-color: #c3c3c3;
}
.expander{
    gap: 8px;
    height: 30px;
    padding-left: 9px;
    font-family: "Liberation Sans", sans-serif;
    font-weight: bold;
}
.dialog-foot{
    display: flex;
    justify-content: flex-end;
    gap: 10px;
    height: 36px;
    padding: 8px 1px 0 0;
    border-top: 1px solid #c8c8c8;
}
.dialog-foot button{
    width: 60px;
    height: 20px;
    border: 1px solid #b4b4b4;
    background-color: #e4e4e4;
    color: #666;
    font-family: "Liberation Sans", sans-serif;
    font-size: 13px;
}

.value-box{
    position: absolute;
    right: 146px;
    top: 376px;
    display: flex;
    align-items: center;
    height: 21px;
    padding: 0 8px 0 4px;
    background-color: #f1f1f1;
}
.grip{
    width: 5px;
    height: 19px;
    margin-right: 5px;
    border: dotted #ccc;
    border-width: 0 2px;
}
.value{
    width: 68px;
    padding: 2px 8px;
    margin-right: 11px;
    border: 1px solid #c8c8c8;
    background-color: #fff;
}
.value input{
    display: block;
    width: 51px;
    height: 14px;
    background-color: #0078d7;
    color: #fff;
}
.tooltip{
    position: absolute;
    right: 66px;
    top: 362px;
    height: 16px;
    padding: 0 2px;
    border: 1px solid #666;
    background-color: #fff;
    color: #000;
    font-family: "Liberation Sans", sans-serif;
    font-size: 11px;
    line-height: 14px;
    white-space: nowrap;
}
.navbar{
    position: absolute;
    left: 50%;
    bottom: 4px;
    transform: translateX(-50%);
    display: flex;
    gap: 9px;
    height: 24px;
    padding: 0 8px 0 2px;
    background-color: #f1f1f1;
}
.navbar .arrow{
    margin-right: -6px;
}
.hint{
    position: absolute;
    right: 20px;
    bottom: 10px;
    font-family: "Liberation Sans", sans-serif;
    font-weight: bold;
}

/* timeline */
.timeline{
    display: flex;
    align-items: center;
    height: 50px;
    border-top: 2px solid #c8c8c8;
}
.playback{
    display: flex;
    gap: 11px;
    padding-left: 10px;
    fill: #444;
}
.features{
    display: flex;
    padding: 6px 0 0 18px;
}
.features button{
    width: 24px;
    height: 27px;
    align-items: flex-start;
    color: #333;
    background: linear-gradient(#c8c8c8, #c8c8c8) center bottom / 100% 2px no-repeat, linear-gradient(#c8c8c8, #c8c8c8) center bottom / 2px 6px no-repeat;
}
.features button:first-child{
    background-position: right bottom, center bottom;
    background-size: 50% 2px, 2px 6px;
}
.features button:last-child{
    background-position: left bottom, center bottom;
    background-size: 50% 2px, 2px 6px;
}
.features svg{
    width: 18px;
    height: 18px;
}
.marker{
    margin-left: -6px;
}
.timeline-gear{
    margin-left: auto;
    margin-right: 13px;
    color: #999;
}

/* taskbar */
.taskbar{
    display: flex;
    align-items: stretch;
    height: 40px;
    background-color: #1d1d1d;
    color: #fff;
    font-family: "Open Sans", sans-serif;
}
.start{
    width: 48px;
}
.search{
    display: flex;
    align-items: center;
    gap: 10px;
    width: 344px;
    padding-left: 11px;
    border: 1px solid #bbb;
    background-color: #f2f2f2;
}
.search input{
    flex: 1;
    font-size: 14px;
    color: #333;
}
.search input::placeholder{
    color: #333;
}
.apps{
    display: flex;
    padding-left: 1px;
}
.apps button{
    width: 49px;
}
.apps .running{
    background: linear-gradient(#76b9ed, #76b9ed) center bottom / 40px 2px no-repeat;
}
.apps .current{
    background-color: #4c4c4c;
    background-size: 100% 2px;
}
.help{
    margin-left: auto;
}
.weather{
    gap: 9px;
    padding-left: 84px;
    font-size: 13px;
}
.tray{
    display: flex;
    align-items: center;
    gap: 10px;
    padding: 0 18px 0 16px;
}
.clock{
    display: flex;
    flex-direction: column;
    align-items: center;
    justify-content: center;
    line-height: 18px;
}
.notices{
    padding: 0 16px 0 21px;
}
.count{
    width: 16px;
    height: 16px;
    margin: 14px 0 0 -9px;
    border: 1px solid #888;
    border-radius: 50%;
    background-color: #333;
    line-height: 14px;
}
```
